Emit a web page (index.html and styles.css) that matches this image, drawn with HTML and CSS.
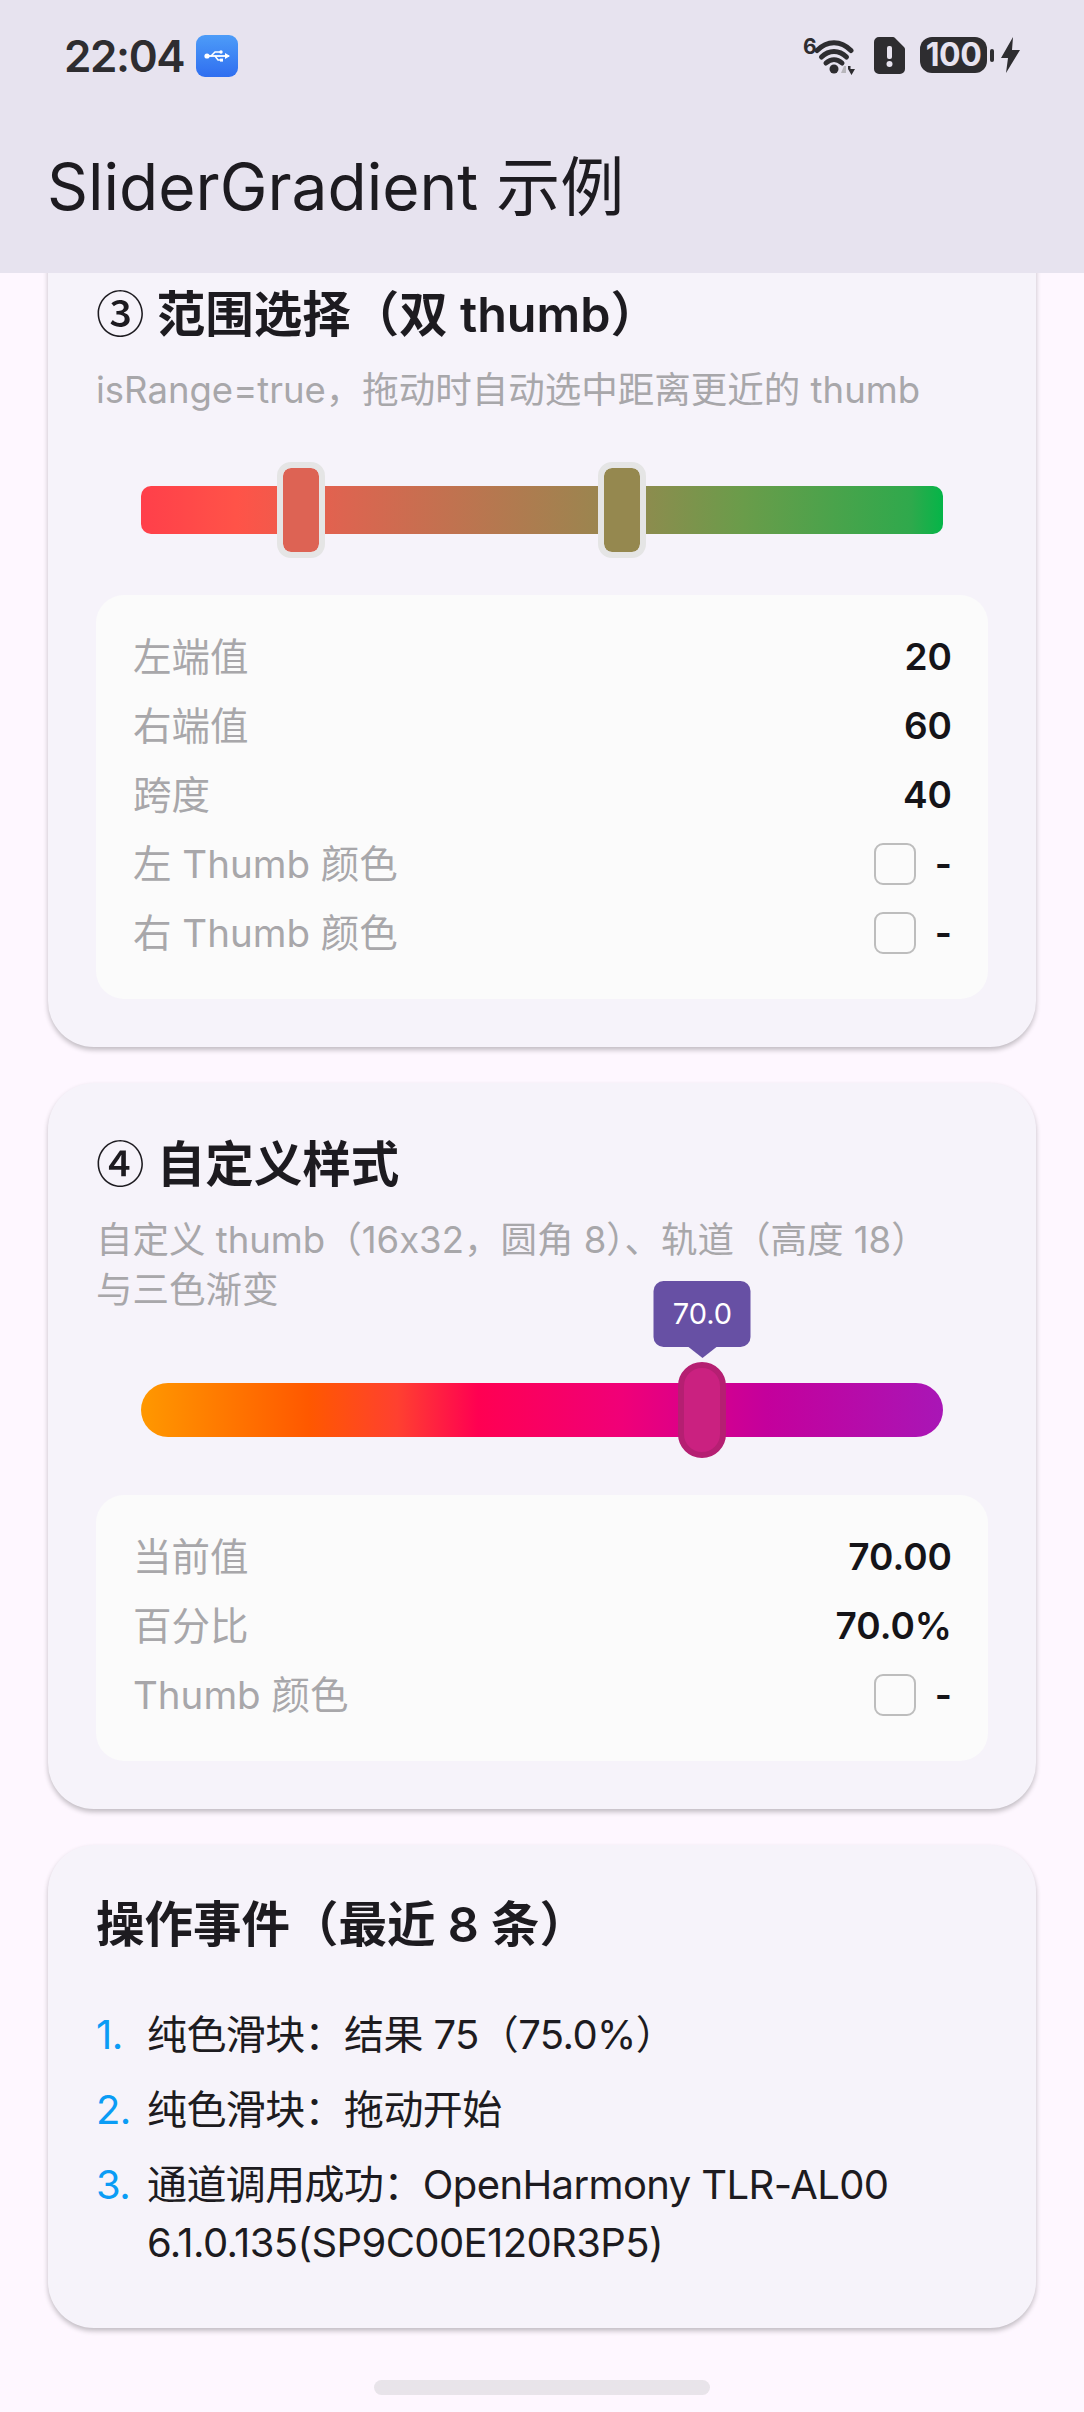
FILE: index.html
```html
<!DOCTYPE html>
<html lang="zh-CN">
<head>
<meta charset="utf-8">
<title>SliderGradient 示例</title>
<link rel="stylesheet" href="styles.css">
</head>
<body>
<div class="screen">
  <header class="appbar">
    <div class="status">
      <div class="status-left">
        <span class="time">22:04</span>
        <span class="usb">
          <svg width="26" height="14" viewBox="0 0 26 14"><path d="M1 7h24" stroke="#fff" stroke-width="1.8" fill="none"/><path d="M7 7l4-4h5M11 7l3 4h3" stroke="#fff" stroke-width="1.5" fill="none"/><circle cx="3" cy="7" r="2.6" fill="#fff"/><circle cx="17" cy="3" r="1.7" fill="#fff"/><rect x="16" y="9.6" width="3" height="3" fill="#fff"/><path d="M21 4l5 3-5 3z" fill="#fff"/></svg>
        </span>
      </div>
      <div class="status-right">
        <span class="net-six">6</span>
        <svg class="wifi" width="44" height="38" viewBox="12 0 44 38">
          <path d="M14 13.500C24 3 38 3 48 13.500" stroke="#2e2d30" stroke-width="5" fill="none" stroke-linecap="round"/>
          <path d="M18.500 20C26 12.500 36 12.500 43.500 20" stroke="#2e2d30" stroke-width="5" fill="none" stroke-linecap="round"/>
          <path d="M23 26C28 21.500 34 21.500 39 26" stroke="#2e2d30" stroke-width="5" fill="none" stroke-linecap="round"/>
          <circle cx="31" cy="32" r="4.500" fill="#2e2d30"/>
          <path d="M38 36l3-7h2v7z" fill="#b8b6bb"/>
          <path d="M45 29h2.500v3H52l-3.500 6-3.500-6z" fill="#2e2d30"/>
        </svg>
        <svg class="sim" width="31" height="37" viewBox="0 0 31 37"><path d="M5 0h14a3 3 0 0 1 2 1l9 9a3 3 0 0 1 1 2v20a5 5 0 0 1-5 5H5a5 5 0 0 1-5-5V5a5 5 0 0 1 5-5z" fill="#2e2d30"/><rect x="13" y="9" width="5" height="13" rx="2" fill="#e7e3ef"/><circle cx="15.500" cy="27" r="3" fill="#e7e3ef"/></svg>
        <span class="battery"><span class="battery-level">100</span></span>
        <span class="nub"></span>
        <svg class="bolt" width="19" height="36" viewBox="0 0 19 36"><path d="M12 0L0 21h7l-2 15L19 13h-8z" fill="#2e2d30"/></svg>
      </div>
    </div>
    <h1 class="appbar-title">SliderGradient 示例</h1>
  </header>

  <main class="content">
    <section class="card card-clipped">
      <h2 class="card-title"><span class="circled">③</span> 范围选择（双 thumb）</h2>
      <p class="card-desc">isRange=true，拖动时自动选中距离更近的 thumb</p>
      <div class="slider slider-range">
        <div class="track track-range"></div>
        <span class="thumb thumb-range thumb-a"></span>
        <span class="thumb thumb-range thumb-b"></span>
      </div>
      <div class="panel">
        <div class="row"><span class="row-label">左端值</span><span class="row-value">20</span></div>
        <div class="row"><span class="row-label">右端值</span><span class="row-value">60</span></div>
        <div class="row"><span class="row-label">跨度</span><span class="row-value">40</span></div>
        <div class="row"><span class="row-label">左 Thumb 颜色</span><span class="row-value with-swatch"><i class="swatch"></i>-</span></div>
        <div class="row"><span class="row-label">右 Thumb 颜色</span><span class="row-value with-swatch"><i class="swatch"></i>-</span></div>
      </div>
    </section>

    <section class="card">
      <h2 class="card-title"><span class="circled">④</span> 自定义样式</h2>
      <p class="card-desc">自定义 thumb（16x32，圆角 8）、轨道（高度 18）<br>与三色渐变</p>
      <div class="slider slider-custom">
        <div class="track track-custom"></div>
        <span class="thumb thumb-custom"></span>
        <span class="tooltip">70.0</span>
      </div>
      <div class="panel">
        <div class="row"><span class="row-label">当前值</span><span class="row-value">70.00</span></div>
        <div class="row"><span class="row-label">百分比</span><span class="row-value">70.0%</span></div>
        <div class="row"><span class="row-label">Thumb 颜色</span><span class="row-value with-swatch"><i class="swatch"></i>-</span></div>
      </div>
    </section>

    <section class="card card-events">
      <h2 class="card-title events-title">操作事件（最近 8 条）</h2>
      <ol class="events">
        <li class="event"><span class="event-no">1.</span><span>纯色滑块：结果 75（75.0%）</span></li>
        <li class="event"><span class="event-no">2.</span><span>纯色滑块：拖动开始</span></li>
        <li class="event"><span class="event-no">3.</span><span>通道调用成功：OpenHarmony TLR-AL00<br>6.1.0.135(SP9C00E120R3P5)</span></li>
      </ol>
    </section>
  </main>
  <div class="home-bar"></div>
</div>
</body>
</html>
```
FILE: styles.css
```css
* { box-sizing: border-box; }
html, body { margin: 0; padding: 0; }
body {
  width: 1084px;
  height: 2412px;
  overflow: hidden;
  background: #fef7ff;
  font-family: Inter, "Noto Sans CJK SC", sans-serif;
  color: #1d1b20;
}
.screen { position: relative; width: 1084px; height: 2412px; overflow: hidden; display: flex; flex-direction: column; }
.appbar { flex: none; height: 273px; background: #e7e3ef; padding: 35px 0 0; }
.status { display: flex; justify-content: space-between; height: 42px; padding: 0 64px 0 64px; align-items: flex-start; }
.status-left { display: flex; gap: 12px; align-items: flex-start; }
.time { font: 600 44px/42px Inter, sans-serif; letter-spacing: -1.4px; color: #2e2d30; }
.usb { width: 42px; height: 42px; border-radius: 9px; background: linear-gradient(180deg, #4d9cf8, #2f6ef0); display: flex; align-items: center; justify-content: center; }
.status-right { display: flex; align-items: flex-start; margin-top: 2px; }
.net-six { font: 700 21px/18px Inter, sans-serif; color: #2e2d30; width: 12px; margin-top: 1px; }
.sim { margin-left: 15px; }
.battery { margin-left: 15px; width: 67px; height: 36px; background: #2e2d30; border-radius: 12px; display: flex; align-items: center; justify-content: center; }
.battery-level { font: 700 32px/36px Inter, sans-serif; letter-spacing: -.5px; color: #e7e3ef; }
.nub { width: 4px; height: 13px; background: #2e2d30; border-radius: 2px; margin: 12px 7px 0 3px; }
.appbar-title { margin: 66px 0 0 47px; font: 400 64px/88px Inter, "Noto Sans CJK SC", sans-serif; color: #1d1b20; }

.content { flex: 1; overflow: hidden; padding: 0 48px; display: flex; flex-direction: column; gap: 36px; }
.card { flex: none; background: #f6f3fa; border-radius: 46px; padding: 49px 48px 48px; box-shadow: 0 3px 5px rgba(0,0,0,.24); }
.card-clipped { margin-top: -30px; padding-top: 0; height: 804px; border-radius: 0 0 46px 46px; }
.card-title { margin: 0; height: 66px; font: 600 48.500px/66px Inter, "Noto Sans CJK SC", sans-serif; color: #1d1b20; }
.circled { font-family: "Noto Sans CJK SC", sans-serif; font-weight: 500; line-height: 0; }
.card-clipped .card-title { height: 105px; padding-top: 39px; }
.card-desc { margin: 17px 0 0; font: 400 36.500px/50px Inter, "Noto Sans CJK SC", sans-serif; color: #a8a7aa; }

.slider { position: relative; margin: 47px 45px 0; }
.slider-range { height: 96px; display: flex; align-items: center; }
.slider-custom { height: 96px; display: flex; align-items: center; }
.track { width: 100%; }
.track-range { height: 48px; border-radius: 10px; background: linear-gradient(90deg, #ff3f4a 0%, #ff5348 12%, #dd6450 25%, #95884f 60%, #6a9c4a 75%, #2fa94c 96%, #05b548 100%); }
.track-custom { height: 54px; border-radius: 27px; background: linear-gradient(90deg, #ff9800 0%, #ff5800 21%, #ff4030 32%, #ff0052 42%, #f00078 60%, #c4009c 78%, #a916b6 100%); }
.thumb { position: absolute; top: 0; width: 48px; height: 96px; transform: translateX(-50%); }
.thumb-range { border: 6px solid #e5e5e5; border-radius: 14px; background-clip: padding-box; }
.thumb-a { left: 20%; background-color: #dd6354; }
.thumb-b { left: 60%; background-color: #95884f; }
.thumb-custom { left: 70%; border: 6px solid #b51f72; border-radius: 24px; background: #ca2180; }
.tooltip { position: absolute; left: 70%; top: -81px; width: 97px; height: 66px; transform: translateX(-50%); background: #6750a4; border-radius: 10px; color: #fff; font: 400 29px/66px Inter, sans-serif; text-align: center; }
.tooltip::after { content: ""; position: absolute; left: 50%; top: 100%; margin-left: -14px; border: 14px solid transparent; border-top: 11px solid #6750a4; border-bottom: 0; }

.panel { margin-top: 37px; background: #fbfbfb; border-radius: 28px; padding: 27px 36px 32px 37px; }
.row { display: flex; justify-content: space-between; align-items: center; height: 69px; }
.row-label { font-size: 38.500px; color: #a8a7aa; margin-bottom: 5px; }
.row-value { font-size: 37px; font-weight: 600; color: #151418; }
.with-swatch { display: flex; align-items: center; gap: 19px; }
.swatch { display: block; width: 42px; height: 42px; border: 2.500px solid #bdbdbd; border-radius: 9px; }

.card-events { padding-top: 47px; height: 483px; }
.events { list-style: none; margin: 48px 0 0; padding: 0; }
.event { display: flex; font-size: 40px; letter-spacing: -.6px; line-height: 58px; margin-bottom: 17px; color: #1d1b20; }
.event-no { width: 51px; flex: none; color: #0a9cf5; }
.home-bar { position: absolute; left: 374px; top: 2380px; width: 336px; height: 15px; border-radius: 8px; background: #e8e4ea; }
```
